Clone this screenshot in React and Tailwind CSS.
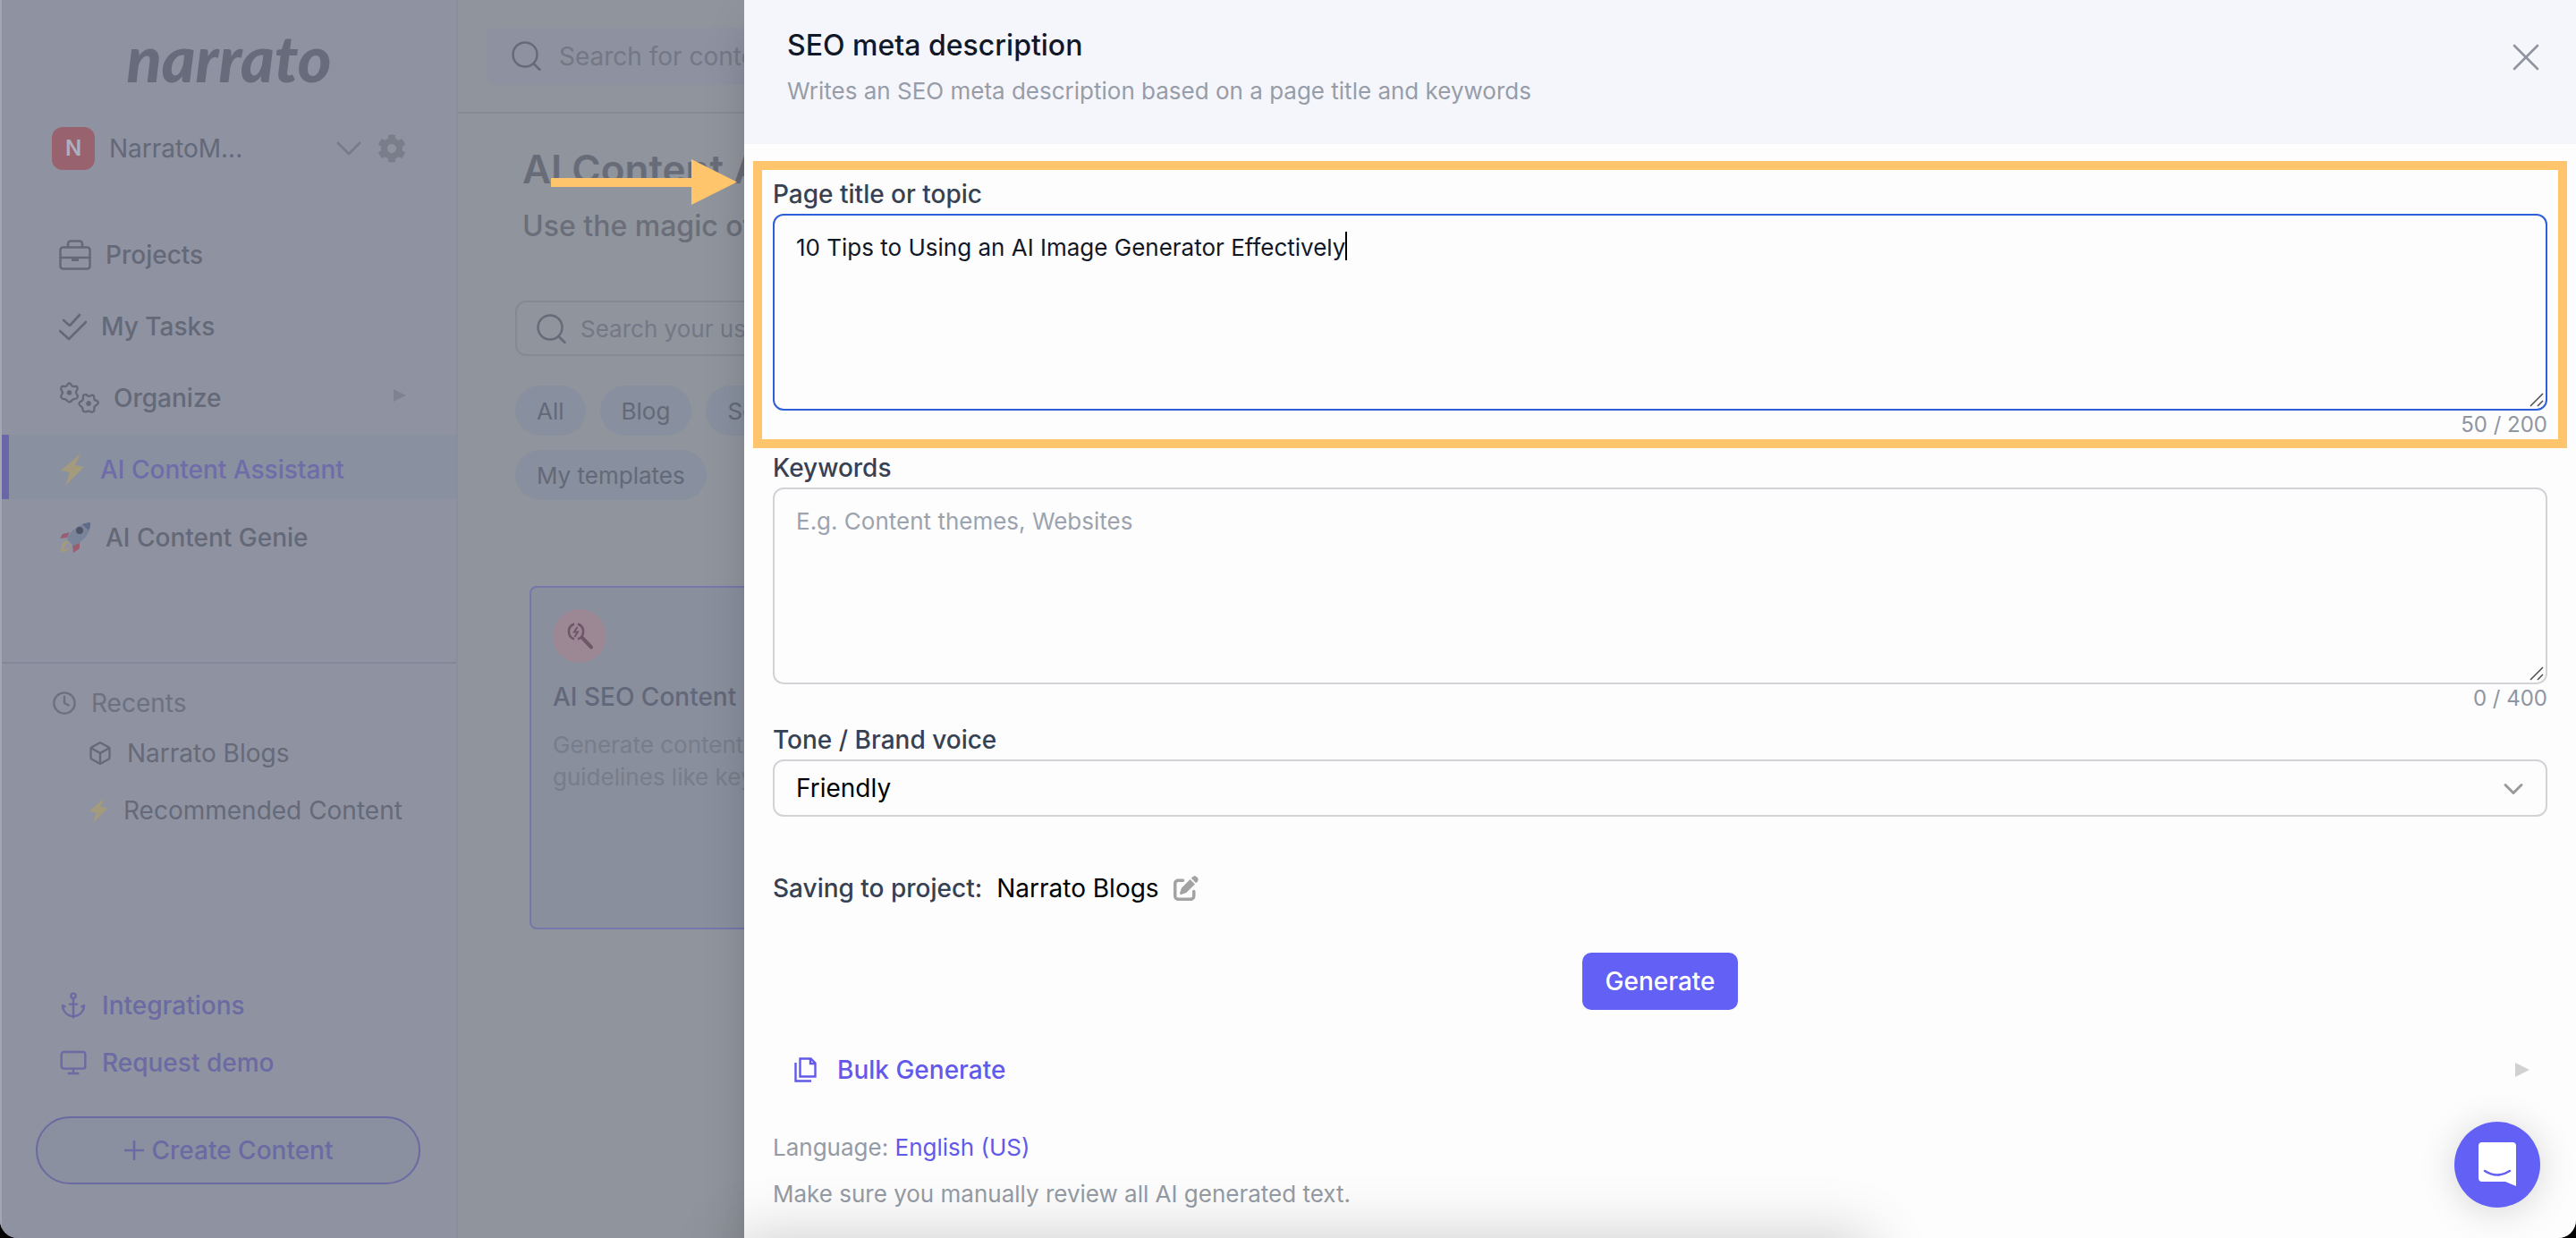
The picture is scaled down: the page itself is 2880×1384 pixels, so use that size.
import React from "react";
import { ChevronDown, X, Anchor, Monitor, Clock, Box } from "lucide-react";
import { FaCog } from "react-icons/fa";
import { FaPenToSquare } from "react-icons/fa6";

function Bolt({ className }) {
  return (
    <svg className={className} viewBox="0 0 28 36" fill="#a49b7c" aria-hidden="true">
      <path d="M23 0 1 19l10 2L6 36 27 15l-10-2z" />
    </svg>
  );
}

function Rocket() {
  return (
    <svg className="h-[34px] w-[36px]" viewBox="0 0 36 34" aria-hidden="true">
      <path d="M12 11 4 13l-3 5 8-1z" fill="#985f72" />
      <path d="M23 22v7l-7 5-1-9z" fill="#985f72" />
      <path d="M35 0C24 1 12 9 9 19l7 7C27 22 36 12 35 0z" fill="#79849b" />
      <path d="M35 0c-3 0-6 1-9 2l7 7c2-3 2-6 2-9z" fill="#5f6c88" />
      <circle cx="23" cy="9" r="4" fill="#4f5566" />
      <path d="M9 20c-6 2-7 7-7 13 5 0 9-1 12-7z" fill="#a39a7c" />
      <path d="M10 23c-3 1-4 4-4 7 3 0 5-1 7-4z" fill="#8e92a1" />
    </svg>
  );
}

function Briefcase() {
  return (
    <svg className="h-[34px] w-[36px]" viewBox="0 0 36 34" fill="none" stroke="currentColor" strokeWidth="2.500" aria-hidden="true">
      <rect x="1.500" y="8.500" width="33" height="24" rx="3" />
      <path d="M10 8V4.500a3 3 0 0 1 3-3h10a3 3 0 0 1 3 3V8M2 20h32" />
      <path d="M14 20h8v4h-8z" fill="currentColor" stroke="none" />
    </svg>
  );
}

function Checks() {
  return (
    <svg className="h-[31px] w-[31px]" viewBox="0 0 31 31" fill="none" stroke="currentColor" strokeWidth="2.600" strokeLinecap="round" strokeLinejoin="round" aria-hidden="true">
      <path d="m5 8 7 6L23 2M1 20l10 9L30 10" />
    </svg>
  );
}

const GEAR =
  "M0-10.500C2-10.500 2-7.500 4-7S8-8.500 9-6 7-2 7.500 0 10.500 3 9 5.500 5 6.500 4 7.500 2 10.500 0 10.500-2 8.500-4 7.500-7.500 8-9 5.500-7.500 2-7.500 0-10.500-3.500-9-6-6-6.500-4-7-2-10.500 0-10.500z";

function Gears() {
  return (
    <svg className="h-[36px] w-[45px]" viewBox="0 0 45 36" fill="none" stroke="currentColor" strokeWidth="2.300" strokeLinejoin="round" aria-hidden="true">
      <g transform="translate(11.500 12)">
        <path d={GEAR} />
        <circle r="1.600" fill="currentColor" />
      </g>
      <g transform="translate(33 24) rotate(30)">
        <path d={GEAR} />
        <circle r="1.600" fill="currentColor" />
      </g>
    </svg>
  );
}

function SearchIcon() {
  return (
    <svg className="h-[33px] w-[33px] shrink-0" viewBox="0 0 33 33" fill="none" stroke="#666b79" strokeWidth="2.500" strokeLinecap="round" aria-hidden="true">
      <circle cx="15" cy="15" r="13.500" />
      <path d="m24.500 25 7 7" />
    </svg>
  );
}

function SeoIcon() {
  return (
    <svg className="h-[30px] w-[30px]" viewBox="0 0 30 30" fill="none" stroke="#6f5769" strokeWidth="2.600" aria-hidden="true">
      <path d="M9 1.500a9 9 0 0 0 0 17M13 1.500a9 9 0 0 1 0 17" />
      <path d="M12.500 5 9 10.500h4L9.500 16" strokeWidth="2" />
      <path d="m18 17 10 10.500" strokeWidth="4" strokeLinecap="round" />
    </svg>
  );
}

function Play({ className }) {
  return (
    <svg className={className} viewBox="0 0 16 16" fill="currentColor" aria-hidden="true">
      <path d="M0 0 16 8 0 16z" />
    </svg>
  );
}

function Copies() {
  return (
    <svg className="h-7 w-[25px]" viewBox="0 0 25 28" fill="none" stroke="currentColor" strokeWidth="2.400" aria-hidden="true">
      <path d="M6.500 1.500h12l5 5v15h-17z" />
      <path d="M18 2v5h5" />
      <path d="M1.500 6v20.500H19" />
    </svg>
  );
}

function ResizeGrip() {
  return (
    <svg className="pointer-events-none absolute right-1 bottom-1 size-4" viewBox="0 0 16 16" stroke="#4b4b4b" strokeWidth="1.500" aria-hidden="true">
      <path d="M1 15 15 1M9 15l6-6" />
    </svg>
  );
}

function NavItem({ icon, label, active, last }) {
  return (
    <a
      href="#"
      className={
        "flex items-center gap-4 border-l-8 pt-1.5 pl-14 text-[28px] font-medium " +
        (last ? "h-16 " : "h-[72px] ") +
        (active ? "border-[#6a67a8] bg-[#8990a0] text-[#6e6ca9]" : "border-transparent text-[#646978]")
      }
    >
      {icon}
      <span>{label}</span>
    </a>
  );
}

function Sidebar() {
  return (
    <aside className="flex w-[512px] shrink-0 flex-col border-r-2 border-l-2 border-r-[#8b8f9d] border-l-[#a3a6b3] bg-[#8e92a1]">
      <div className="flex h-[124px] items-center justify-center pt-1 font-[Lato] text-[72px] font-black italic text-[#676b7c]">
        narrato
      </div>
      <div className="flex h-[84px] items-center pr-14 pl-14">
        <span className="flex size-12 items-center justify-center rounded-xl bg-[#98636e] text-2xl font-semibold text-[#adb0bc]">N</span>
        <span className="ml-4 grow text-[28px] text-[#646978]">NarratoM...</span>
        <ChevronDown className="size-12 text-[#777b88]" strokeWidth={1.3} />
        <FaCog className="ml-2 size-8 text-[#7a7e8b]" />
      </div>
      <nav className="mt-[38px] flex flex-col gap-2">
        <NavItem icon={<Briefcase />} label="Projects" />
        <NavItem icon={<Checks />} label="My Tasks" />
        <div className="flex items-center text-[#7f8391]">
          <div className="grow">
            <NavItem icon={<Gears />} label="Organize" />
          </div>
          <Play className="mr-14 size-3.5" />
        </div>
        <NavItem active icon={<Bolt className="h-9 w-[30px]" />} label="AI Content Assistant" />
        <NavItem last icon={<Rocket />} label="AI Content Genie" />
      </nav>
      <div className="mt-[110px] border-t-2 border-[#83879a] pt-6 text-[28px] text-[#6d717f]">
        <div className="flex h-10 items-center gap-4 pl-14">
          <Clock className="size-7" strokeWidth={2} />
          Recents
        </div>
        <a href="#" className="mt-4 flex h-10 items-center gap-4 pl-24 text-[#666a78]">
          <Box className="size-7" strokeWidth={2} />
          Narrato Blogs
        </a>
        <a href="#" className="mt-6 flex h-10 items-center gap-4 pl-24 text-[#666a78]">
          <Bolt className="h-7 w-6" />
          Recommended Content
        </a>
      </div>
      <div className="mt-auto flex flex-col pb-[60px] text-[28px] font-medium text-[#6b6aa2]">
        <a href="#" className="flex h-16 items-center gap-4 pl-16">
          <Anchor className="size-8" strokeWidth={1.8} />
          Integrations
        </a>
        <a href="#" className="flex h-16 items-center gap-4 pl-16">
          <Monitor className="size-8" strokeWidth={1.8} />
          Request demo
        </a>
        <button type="button" className="mt-7 mr-10 ml-[38px] flex h-[76px] items-center justify-center gap-2 rounded-full border-2 border-[#6b6aa2] bg-[#8a90a0]">
          <svg className="size-6" viewBox="0 0 24 24" stroke="currentColor" strokeWidth="2.600" aria-hidden="true">
            <path d="M12 1v22M1 12h22" />
          </svg>
          Create Content
        </button>
      </div>
    </aside>
  );
}

function Chip({ children }) {
  return (
    <button type="button" className="h-14 rounded-full bg-[#888f9e] px-6 text-[26px] text-[#646977]">
      {children}
    </button>
  );
}

function Library() {
  return (
    <main className="flex w-[1200px] shrink-0 flex-col bg-[#90949c]">
      <div className="flex h-[127px] items-center border-b-2 border-[#868a94] px-8">
        <label className="flex h-16 grow items-center gap-5 rounded-lg bg-[#8d91a0] px-7">
          <SearchIcon />
          <input aria-label="Search for content" placeholder="Search for content" className="grow bg-transparent text-[28px] placeholder:text-[#747886]" />
        </label>
      </div>
      <h1 className="mt-8 pl-[72px] text-[44px] leading-[60px] font-semibold text-[#686c78]">AI Content Assistant</h1>
      <p className="mt-2.5 pl-[72px] text-[32px] leading-[48px] font-medium text-[#6a6e7a]">Use the magic of AI</p>
      <label className="mr-16 ml-16 mt-[59px] flex h-[62px] items-center gap-4 rounded-xl border-2 border-[#858994] px-[22px]">
        <SearchIcon />
        <input aria-label="Search your use case" placeholder="Search your use case" className="grow bg-transparent text-[26px] placeholder:text-[#747886]" />
      </label>
      <div className="mt-[33px] ml-16 flex w-[420px] flex-wrap gap-4">
        <Chip>All</Chip>
        <Chip>Blog</Chip>
        <Chip>Social</Chip>
        <Chip>My templates</Chip>
      </div>
      <article className="mt-24 ml-20 h-[384px] w-[420px] rounded-lg border-2 border-[#7876ac] bg-[#898f9d] p-6">
        <div className="flex size-[60px] items-center justify-center rounded-full bg-[#9c8795]">
          <SeoIcon />
        </div>
        <h2 className="mt-4 text-[28px] leading-[44px] font-medium whitespace-nowrap text-[#62687a]">AI SEO Content</h2>
        <p className="mt-3.5 text-[26px] leading-9 text-[#787d8b]">
          Generate content
          <br />
          guidelines like key
        </p>
      </article>
    </main>
  );
}

const LABEL = "block text-[28px] leading-[44px] font-medium text-[#374151]";
const AREA = "block h-[220px] w-full resize-none rounded-xl border-2 px-6 py-4 text-[26px] leading-10 outline-none";
const COUNT = "text-right text-[24px] leading-8 text-[#8f95a1]";

function Panel() {
  return (
    <section role="dialog" aria-label="SEO meta description" className="absolute inset-y-0 right-0 left-[832px] flex flex-col bg-[#fdfdfd] shadow-2xl">
      <header className="flex h-[161px] shrink-0 items-start justify-between bg-[#f5f6fc] pr-[30px] pl-12">
        <div className="pt-7">
          <h2 className="text-[32px] leading-[46px] font-medium text-[#111827]">SEO meta description</h2>
          <p className="mt-1.5 text-[26px] leading-[44px] text-[#979da8]">Writes an SEO meta description based on a page title and keywords</p>
        </div>
        <button type="button" aria-label="Close" className="mt-[38px] text-[#8f949f]">
          <X className="size-[52px]" strokeWidth={1.2} />
        </button>
      </header>

      <form className="flex flex-col">
        <div className="mx-[10px] mt-[19px] border-[10px] border-[#fec56d] px-3 pt-[5px]">
          <label htmlFor="topic" className={LABEL}>Page title or topic</label>
          <div className="relative">
            <textarea id="topic" defaultValue="10 Tips to Using an AI Image Generator Effectively" className={AREA + " border-[#2f5fd8] text-[#111827]"} />
            <span className="absolute top-5 left-[640px] h-8 w-0.5 bg-black" aria-hidden="true" />
            <ResizeGrip />
          </div>
          <p className={COUNT}>50 / 200</p>
        </div>
        <div className="px-8">
          <label htmlFor="keywords" className={LABEL}>Keywords</label>
          <div className="relative">
            <textarea id="keywords" placeholder="E.g. Content themes, Websites" className={AREA + " border-[#d1d3d6] placeholder:text-[#9ca3af]"} />
            <ResizeGrip />
          </div>
          <p className={COUNT}>0 / 400</p>
          <label htmlFor="tone" className={LABEL + " mt-2"}>Tone / Brand voice</label>
          <div className="relative">
            <select id="tone" className="block h-16 w-full appearance-none rounded-xl border-2 border-[#d1d3d6] px-6 text-[28px] text-black">
              <option>Friendly</option>
            </select>
            <ChevronDown className="pointer-events-none absolute top-[15px] right-5 size-9 text-[#9a9a9a]" />
          </div>
          <div className="mt-[60px] flex h-10 items-center text-[28px] font-medium text-[#374151]">
            Saving to project:
            <span className="ml-4 font-normal text-black">Narrato Blogs</span>
            <button type="button" aria-label="Change project" className="ml-4 text-[#a3a3a3]">
              <FaPenToSquare className="size-7" />
            </button>
          </div>
          <div className="mt-[52px] flex justify-center">
            <button type="button" className="h-16 rounded-[10px] bg-[#6360f5] px-[26px] text-[28px] font-medium text-white">Generate</button>
          </div>
          <button type="button" className="mt-[47px] flex h-10 w-full items-center pr-5 pl-6 text-[28px] font-medium text-[#6259ea]">
            <Copies />
            <span className="ml-[23px]">Bulk Generate</span>
            <Play className="ml-auto size-4 text-[#d1d1d1]" />
          </button>
          <p className="mt-12 text-[26px] leading-[38px] text-[#959ba4]">
            Language: <a href="#" className="text-[#6259ea]">English (US)</a>
          </p>
          <p className="mt-3.5 text-[26px] leading-[38px] text-[#959ba4]">Make sure you manually review all AI generated text.</p>
        </div>
      </form>
    </section>
  );
}

function Arrow() {
  return (
    <svg className="absolute top-[178px] left-[616px] h-[52px] w-[208px]" viewBox="0 0 208 52" fill="#fec56d" aria-hidden="true">
      <path d="M0 21h157V0l51 25.500L157 51V31H0z" />
    </svg>
  );
}

function ChatButton() {
  return (
    <button type="button" aria-label="Open chat" className="absolute right-10 bottom-[34px] flex size-24 items-center justify-center rounded-full bg-[#6360f5] shadow-[0_4px_40px_rgba(0,0,0,0.16)]">
      <svg className="h-[50px] w-[44px]" viewBox="0 0 44 50" aria-hidden="true">
        <path d="M5 0h34a4 4 0 0 1 4 4v45l-12-5H5a4 4 0 0 1-4-4V4a4 4 0 0 1 4-4z" fill="#fff" />
        <path d="M8 32q14 9 28 0" fill="none" stroke="#6360f5" strokeWidth="2.500" strokeLinecap="round" />
      </svg>
    </button>
  );
}

export default function App() {
  return (
    <div className="h-screen min-h-[1384px] bg-black font-[Inter,sans-serif]">
      <div className="relative flex h-full overflow-hidden rounded-b-[20px] bg-[#90949c]">
        <Sidebar />
        <Library />
        <Panel />
        <Arrow />
        <div className="pointer-events-none absolute top-full right-[790px] left-[820px] h-20 shadow-[0_0_70px_rgba(0,0,0,0.2)]" />
        <ChatButton />
      </div>
    </div>
  );
}
